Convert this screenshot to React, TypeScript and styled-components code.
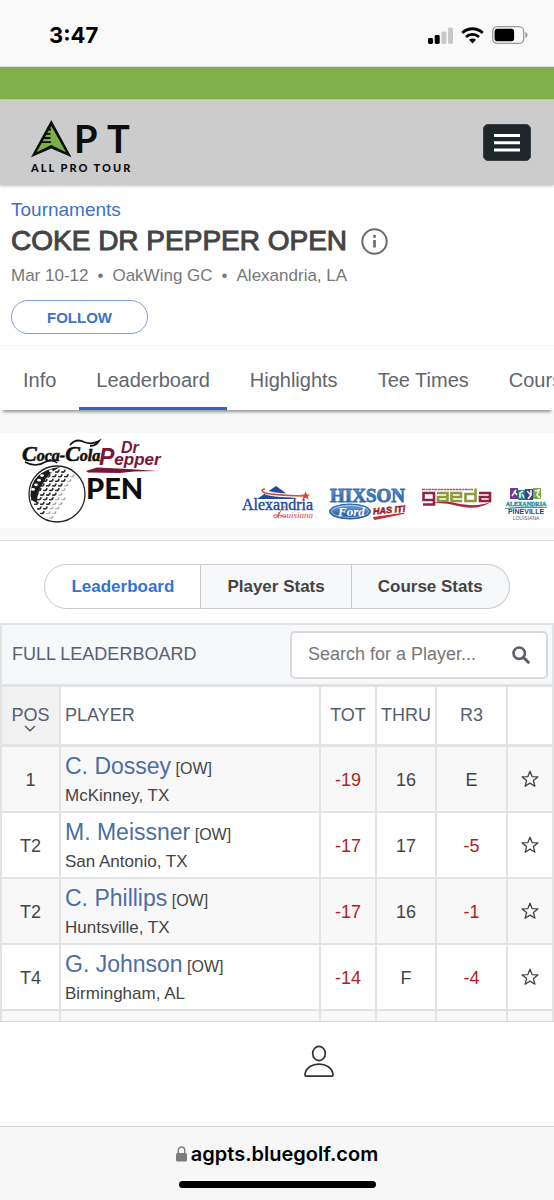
import React from "react";
import styled, { createGlobalStyle } from "styled-components";

const sans = `"Liberation Sans", Arial, sans-serif`;
const system = `Inter, "Liberation Sans", sans-serif`;
const line = "#e2e3e4";

const GlobalStyle = createGlobalStyle`
  *, *::before, *::after { box-sizing: border-box; }
  body { margin: 0; background: #fff; font-family: ${sans}; color: #444; }
  button, input { font: inherit; color: inherit; margin: 0; }
  button { cursor: pointer; }
  svg { display: block; flex: none; }
`;

const Shell = styled.div`
  display: flex;
  flex-direction: column;
  height: 100vh;
  overflow: hidden;
`;

const StatusBar = styled.div`
  display: flex;
  flex: none;
  align-items: center;
  justify-content: space-between;
  height: 67px;
  padding: 4px 26px 0 49px;
  background: #f9f9f9;
  border-bottom: 1px solid #dcdfd8;
`;

const Clock = styled.time`
  font: 700 22px/28px ${system};
  color: #000;
`;

const StatusIcons = styled.div`
  display: flex;
  align-items: center;
  gap: 8px;
`;

const Page = styled.main`
  flex: 1;
  min-height: 0;
  overflow: hidden;
`;

const GreenBand = styled.div`
  height: 33px;
  background: #82b14b;
  border-bottom: 1px solid #c4cdb8;
`;

const SiteHeader = styled.header`
  display: flex;
  align-items: center;
  justify-content: space-between;
  height: 85px;
  padding: 0 23px 0 30px;
  background: #ccc;
  box-shadow: 0 1px 3px rgba(0, 0, 0, 0.25);
`;

const MenuButton = styled.button`
  display: grid;
  place-items: center;
  width: 48px;
  height: 37px;
  padding: 0;
  border: 1px solid #3b4146;
  border-radius: 5px;
  background: #1f262a;
`;

const Intro = styled.section`
  padding: 14px 11px 11px;
  border-bottom: 1px solid #f3f3f3;
`;

const Crumb = styled.a`
  display: block;
  font-size: 19px;
  line-height: 22px;
  color: #3a73c8;
  text-decoration: none;
`;

const TitleRow = styled.div`
  display: flex;
  align-items: center;
  gap: 14px;
  height: 40px;
`;

const Title = styled.h1`
  margin: 0;
  font-size: 28px;
  line-height: 38px;
  font-weight: 400;
  -webkit-text-stroke: 1px #444;
`;

const IconButton = styled.button`
  display: grid;
  place-items: center;
  padding: 0;
  border: 0;
  background: none;
`;

const Meta = styled.p`
  display: flex;
  gap: 9px;
  margin: 5px 0 14px;
  font-size: 17px;
  line-height: 20px;
  color: #777;
`;

const FollowButton = styled.button`
  display: block;
  width: 137px;
  height: 34px;
  padding: 1px 0 0;
  border: 1px solid #7f9fd6;
  border-radius: 17px;
  background: #fff;
  color: #3a73c8;
  font-size: 15px;
  font-weight: 700;
`;

const Tabs = styled.nav`
  position: relative;
  display: flex;
  gap: 6px;
  height: 64px;
  padding: 0 6px;
  background: #fff;
  box-shadow: 0 5px 3px -3px rgba(0, 0, 0, 0.4);
  white-space: nowrap;
`;

const Tab = styled.a<{ $active?: boolean }>`
  flex: none;
  padding: 7px 17px 0;
  border-bottom: 3px solid ${(p) => (p.$active ? "#3762b8" : "transparent")};
  font-size: 20px;
  line-height: 54px;
  color: #62666e;
  text-decoration: none;
`;

const SponsorBand = styled.section`
  padding: 23px 0 12px;
  background: #f8f8f8;
  border-bottom: 1px solid #dedede;
`;

const Sponsors = styled.div`
  display: flex;
  align-items: flex-start;
  justify-content: space-between;
  height: 95px;
  padding: 4px 6px 0 20px;
  background: #fff;
`;

const SponsorLogos = styled.div`
  display: flex;
  gap: 12px;
  padding-top: 48px;
`;

const Segments = styled.div`
  display: flex;
  justify-content: center;
  padding: 23px 0 14px;
`;

const Segment = styled.button<{ $active?: boolean }>`
  height: 45px;
  padding: 0 26px;
  border: 1px solid #c9cacd;
  border-left-width: 0;
  background: ${(p) => (p.$active ? "#fff" : "#f7f8fa")};
  color: ${(p) => (p.$active ? "#3373d6" : "#444")};
  font-size: 17px;
  font-weight: 700;

  &:first-child {
    border-left-width: 1px;
    border-radius: 23px 0 0 23px;
  }
  &:last-child {
    border-radius: 0 23px 23px 0;
  }
`;

const BoardHeader = styled.div`
  display: flex;
  align-items: center;
  justify-content: space-between;
  height: 64px;
  padding: 0 4px 0 10px;
  border: 2px solid ${line};
  border-bottom-width: 3px;
  background: #f7f8fa;
`;

const BoardTitle = styled.h2`
  margin: 0;
  font-size: 18px;
  font-weight: 400;
  color: #5a6072;
`;

const SearchBox = styled.form`
  display: flex;
  width: 258px;
  height: 48px;
  border: 2px solid #d9dadd;
  border-radius: 5px;
  background: #fff;
`;

const SearchInput = styled.input`
  flex: 1;
  min-width: 0;
  padding: 0 0 0 16px;
  border: 0;
  background: none;
  font-size: 18px;

  &::placeholder {
    color: #777;
    opacity: 1;
  }
`;

const SearchButton = styled(IconButton)`
  width: 50px;
`;

const Board = styled.table`
  width: 100%;
  table-layout: fixed;
  border-collapse: separate;
  border-spacing: 0;
  border-left: 2px solid ${line};
  font-size: 18px;
`;

const Col = styled.col<{ $width?: number }>`
  width: ${(p) => (p.$width ? `${p.$width}px` : "auto")};
`;

const HeadCell = styled.th<{ $left?: boolean; $sorted?: boolean }>`
  height: 60px;
  padding: ${(p) => (p.$left ? "0 4px 2px" : "0 0 2px")};
  border-right: 2px solid ${line};
  border-bottom: 3px solid ${line};
  background: ${(p) => (p.$sorted ? "#f2f2f2" : "#fff")};
  font-weight: 400;
  line-height: 20px;
  text-align: ${(p) => (p.$left ? "left" : "center")};
  color: #565d72;
`;

const SortButton = styled.button`
  position: relative;
  padding: 0;
  border: 0;
  background: none;

  svg {
    position: absolute;
    top: 20px;
    left: 50%;
    margin-left: -6px;
  }
`;

const Row = styled.tr`
  background: #fff;

  &:nth-child(odd) {
    background: #f8f8f8;
  }
`;

const Cell = styled.td<{ $left?: boolean; $under?: boolean }>`
  height: 66px;
  padding: ${(p) => (p.$left ? "0 4px" : "2px 0 0")};
  border-right: 2px solid ${line};
  border-bottom: 2px solid ${line};
  text-align: ${(p) => (p.$left ? "left" : "center")};
  color: ${(p) => (p.$under ? "#b5201f" : "#444")};
`;

const PlayerLine = styled.div`
  font-size: 16px;
  line-height: 30px;
`;

const PlayerLink = styled.a`
  font-size: 23px;
  color: #4e6da3;
  text-decoration: none;
`;

const Hometown = styled.div`
  font-size: 17px;
  line-height: 24px;
`;

const StarButton = styled(IconButton)`
  width: 100%;
`;

const BottomNav = styled.nav`
  display: flex;
  flex: none;
  justify-content: center;
  height: 105px;
  padding: 23px 0 0 84px;
  border-top: 1px solid #d6d6d6;
  background: #fff;

  a {
    height: 34px;
    color: #333;
  }
`;

const BrowserBar = styled.footer`
  display: flex;
  flex: none;
  flex-direction: column;
  align-items: center;
  justify-content: space-between;
  height: 74px;
  padding: 14px 0 12px;
  border-top: 1px solid #d2d3d4;
  background: #f7f7f8;
`;

const Address = styled.div`
  display: flex;
  align-items: center;
  gap: 4px;
  font: 600 20px/26px ${system};
  color: #000;
`;

const HomeIndicator = styled.div`
  width: 197px;
  height: 7px;
  border-radius: 4px;
  background: #000;
`;

const SignalIcon = () => (
  <svg width="25" height="17" viewBox="0 0 25 17" aria-hidden="true">
    <rect x="0" y="11" width="5" height="6" rx="1.4" fill="#000" />
    <rect x="6.7" y="8" width="5" height="9" rx="1.4" fill="#000" />
    <rect x="13.4" y="4.5" width="5" height="12.5" rx="1.4" fill="#c8c8c8" />
    <rect x="20" y="0.5" width="5" height="16.5" rx="1.4" fill="#c8c8c8" />
  </svg>
);

const WifiIcon = () => (
  <svg width="23" height="17" viewBox="0 0 23 17" fill="none" stroke="#000" aria-hidden="true">
    <path d="M1.3 6 A14.6 14.6 0 0 1 21.7 6" strokeWidth="3" />
    <path d="M5 9.9 A9.4 9.4 0 0 1 18 9.9" strokeWidth="2.8" />
    <path d="M8 12.8 Q11.5 10.4 15 12.8 L11.5 16.6 Z" fill="#000" stroke="none" />
  </svg>
);

const BatteryIcon = () => (
  <svg width="36" height="18" viewBox="0 0 36 18" aria-hidden="true">
    <rect x="0.7" y="0.7" width="31" height="16.6" rx="4.6" fill="none" stroke="#999" strokeWidth="1.3" />
    <rect x="2.6" y="2.8" width="19.5" height="12.4" rx="2.6" fill="#000" />
    <path d="M33.4 6 Q35.6 7 35.6 9 Q35.6 11 33.4 12 Z" fill="#999" />
  </svg>
);

const AptLogo = () => (
  <svg width="104" height="76" viewBox="30 106 104 76" role="img" aria-label="APT All Pro Tour">
    <path d="M51.3 121 L71.5 158.3 L51.3 149.5 L31 158.3 Z" fill="#0b0e0d" />
    <path d="M51.3 127 L66 153.3 L51.3 146 L36.5 153.3 Z" fill="#7db146" />
    <path
      d="M47.5 130.5 H51 M45.5 134.8 H50.5 M43 139 H50.5 M40.5 143.2 H51"
      stroke="#0b0e0d"
      strokeWidth="1.8"
    />
    <g fill="#0b0e0d" fontFamily="Lato, sans-serif">
      <text x="74" y="154" fontSize="38" fontWeight="700">P</text>
      <text x="107" y="154" fontSize="38" fontWeight="700">T</text>
      <text x="31" y="173" fontSize="11" fontWeight="900" letterSpacing="2">ALL PRO TOUR</text>
    </g>
  </svg>
);

type Dimple = { x: number; y: number; dark: boolean; faint: boolean };

const dimples: Dimple[] = [];
for (let r = 0; r < 11; r++) {
  for (let c = 0; c < 9; c++) {
    const x = 33 + c * 6 + (r % 2) * 3;
    const y = 471 + r * 4.6;
    const dx = x - 57;
    const dy = y - 494;
    const depth = dx + dy * 0.7;
    if (dx * dx + dy * dy < 25 * 25 && dx * 0.95 + dy * 0.45 < 8) {
      dimples.push({ x, y, dark: depth < -22 && dy < 8, faint: depth > 1 });
    }
  }
}

const OpenLogo = () => (
  <svg width="144" height="90" viewBox="20 437 144 90" role="img" aria-label="Coca-Cola Dr Pepper Open">
    <text x="22" y="461" fontFamily="'Liberation Serif', serif" fontStyle="italic" fontWeight="700" fontSize="16" fill="#111" stroke="#111" strokeWidth="0.6">
      <tspan fontSize="22">C</tspan>
      <tspan>oca-</tspan>
      <tspan fontSize="22">C</tspan>
      <tspan>ola</tspan>
    </text>
    <path d="M25 462 Q36 468 45 462 Q54 459 57 463" fill="none" stroke="#111" strokeWidth="1.6" />
    <path d="M70 445 Q76 438 84 442 Q92 445 99 441 Q96 446 90 446" fill="none" stroke="#111" strokeWidth="1.8" />
    <g fontFamily="'Liberation Sans', sans-serif" fontStyle="italic" fontWeight="700" fill="#7b1735">
      <text x="121" y="453" fontSize="16">Dr</text>
      <text x="99" y="465" fontSize="17">
        <tspan fontSize="23">P</tspan>
        <tspan>epper</tspan>
      </text>
    </g>
    <path d="M86 471 L97 467.5 L128 469 L158 471 L134 471.5 L120 473 L88 472.5 Z" fill="#7b1735" />
    <circle cx="57" cy="494" r="28" fill="#fff" stroke="#222" strokeWidth="1.3" />
    <path d="M30.500 496 Q30 471 60 467 Q47 474 44 482 Q37 490 37 503 Q31 501 30.500 496 Z" fill="#1b1b1b" />
    {dimples.map(({ x, y, dark, faint }) =>
      dark ? (
        <ellipse key={`${x}-${y}`} cx={x} cy={y} rx="1.900" ry="1.400" fill="#fff" />
      ) : (
        <path
          key={`${x}-${y}`}
          d={`M${x - 2} ${y + 1} Q${x + 1} ${y + 1.6} ${x + 2} ${y - 1.4} Q${x + 2.8} ${y + 2.6} ${x - 2} ${y + 1} Z`}
          fill={faint ? "#999" : "#222"}
          stroke={faint ? "#999" : "#222"}
          strokeWidth={faint ? 0.4 : 0.9}
        />
      )
    )}
    <text x="86" y="499" fontFamily="Lato, sans-serif" fontSize="29" fontWeight="900" fill="#0d0d0d">PEN</text>
  </svg>
);

const AlexandriaLogo = () => (
  <svg width="76" height="38" viewBox="241 485 76 38" role="img" aria-label="Alexandria Louisiana">
    <path d="M257 499 L276 486 L294 499 Z" fill="#24489a" />
    <path d="M262 490 Q266 494 280 495 L304 496" fill="none" stroke="#fff" strokeWidth="4" />
    <path d="M265 489 Q259 490 265 493 Q273 495 303 496" fill="none" stroke="#d8463b" strokeWidth="1.6" />
    <path d="M305.500 491.500 L307 494.400 L310 494.400 L307.700 496.500 L308.700 499.500 L305.500 497.700 L302.500 499.500 L303.400 496.500 L301 494.400 L304.300 494.400 Z" fill="#d8463b" />
    <text x="242" y="510" fontFamily="'Liberation Serif', serif" fontSize="16" fill="#24489a" stroke="#24489a" strokeWidth="0.4">Alexandria</text>
    <text x="277" y="518" fontFamily="'Liberation Serif', serif" fontSize="9" fontStyle="italic" fill="#d8463b">Louisiana</text>
    <path d="M285 506 Q280 511 277 517 Q273 519 274 515 Q278 514 286 517" fill="none" stroke="#d8463b" strokeWidth="0.9" />
  </svg>
);

const HixsonLogo = () => (
  <svg width="79" height="38" viewBox="329 485 79 38" role="img" aria-label="Hixson Ford Has It!">
    <defs>
      <linearGradient id="hixson" x1="0" y1="0" x2="0" y2="1">
        <stop offset="0" stopColor="#6fa4dc" />
        <stop offset="1" stopColor="#1c4f96" />
      </linearGradient>
    </defs>
    <text x="330" y="502" fontFamily="'Liberation Serif', serif" fontSize="19" fontWeight="700" fill="url(#hixson)" stroke="#3a6fb3" strokeWidth="0.9">HIXSON</text>
    <ellipse cx="350" cy="511.500" rx="20.500" ry="7.500" fill="url(#hixson)" stroke="#24599e" />
    <ellipse cx="350" cy="511.500" rx="18.500" ry="6" fill="none" stroke="#c6dcf2" strokeWidth="0.7" />
    <text x="338" y="516" fontFamily="'Liberation Serif', serif" fontSize="13" fontStyle="italic" fontWeight="700" fill="#fff">Ford</text>
    <g transform="rotate(-5 390 510)">
      <text x="373" y="513" fontFamily="'Liberation Sans', sans-serif" fontSize="9" fontStyle="italic" fontWeight="700" fill="#c4252b" stroke="#7d1418" strokeWidth="0.5">HAS IT!</text>
      <path d="M373 516 L404 514.500 L374 518 Z" fill="#c4252b" stroke="#c4252b" />
    </g>
  </svg>
);

const GaedaLogo = () => (
  <svg width="72" height="38" viewBox="420 485 72 38" role="img" aria-label="gaeda">
    <path d="M422 489.500 H473" stroke="#a8546a" strokeWidth="1.500" strokeDasharray="3 0.600 2 0.500" />
    <g fill="none" strokeWidth="2.600">
      <path d="M434 493 H423.500 V500 H434 M434 491.700 V504.500 H423" stroke="#8d2443" />
      <path d="M437 493 H447.500 V501 H438 V497 H447.500" stroke="#8d9a3a" />
      <path d="M462 501 H451.500 V493 H461 V497 H451.500" stroke="#8d9a3a" />
      <path d="M475.500 488.500 V501 H465.500 V494 H475" stroke="#8d9a3a" />
      <path d="M479 493 H490 V501 H480 V497 H490" stroke="#8d2443" />
    </g>
    <path d="M430 503.500 Q445 500 460 504 Q478 507 491 502 Q477 511 458 506 Q444 502 430 503.500 Z" fill="#a3293f" />
  </svg>
);

const PinevilleLogo = () => (
  <svg width="44" height="38" viewBox="503 486 44 38" role="img" aria-label="Alexandria Pineville Louisiana">
    <rect x="509" y="489" width="8" height="11" fill="#6f3b96" />
    <rect x="517" y="491" width="7" height="10" fill="#25857f" />
    <rect x="524" y="490" width="8" height="11" fill="#3d3d93" />
    <rect x="532" y="489" width="8" height="11" fill="#7da843" />
    <g fill="none" stroke="#fff" strokeWidth="1.500">
      <path d="M511 497 L515 491 M513 492 L516 496" />
      <path d="M519 499 V494 L522 492 M521 495 L523 499" />
      <path d="M526 492 L530 496 L527 500 M530 491 V496" />
      <path d="M534 492 L538 491 L536 496 L539 499" />
    </g>
    <text x="525" y="507" textAnchor="middle" fontFamily="'Liberation Serif', serif" fontSize="6" fontWeight="700" fill="#218b95" stroke="#218b95" strokeWidth="0.300">ALEXANDRIA</text>
    <path d="M504 509.500 Q525 506.500 546 508.500 Q525 508.500 504 509.500 Z" fill="#218b95" stroke="#218b95" strokeWidth="0.500" />
    <text x="525" y="515" textAnchor="middle" fontFamily="'Liberation Sans', sans-serif" fontSize="7" fontWeight="700" fill="#3c3a80">PINEVILLE</text>
    <text x="525" y="521" textAnchor="middle" fontFamily="'Liberation Sans', sans-serif" fontSize="5" fill="#55557c">LOUISIANA</text>
  </svg>
);

const InfoIcon = () => (
  <svg width="27" height="27" viewBox="0 0 27 27" fill="none" stroke="#6a6a6a" aria-hidden="true">
    <circle cx="13.500" cy="13.500" r="12.200" strokeWidth="2" />
    <path d="M13.500 12 V19.500 M13.500 7 V9.800" strokeWidth="2.600" />
  </svg>
);

const SearchIcon = () => (
  <svg width="18" height="18" viewBox="0 0 18 18" fill="none" stroke="#5c6070" aria-hidden="true">
    <circle cx="7.200" cy="7.200" r="5.700" strokeWidth="2.600" />
    <path d="M11.500 11.500 L16.300 16.300" strokeWidth="3" strokeLinecap="round" />
  </svg>
);

const StarIcon = () => (
  <svg width="18" height="20" viewBox="0 0 18 20" fill="none" stroke="#444" strokeWidth="1.300" strokeLinejoin="round" aria-hidden="true">
    <path d="M9 1.200 L11.100 6.600 L16.900 6.900 L12.400 10.600 L13.900 16.200 L9 13.100 L4.100 16.200 L5.600 10.600 L1.100 6.900 L6.900 6.600 Z" />
  </svg>
);

const PersonIcon = () => (
  <svg width="32" height="34" viewBox="0 0 32 34" fill="none" stroke="currentColor" strokeWidth="1.700" aria-hidden="true">
    <ellipse cx="16" cy="8.500" rx="6.300" ry="7.100" />
    <path d="M3.200 31.200 Q1.800 31.200 2 29.500 C2.800 22.600 9 19.200 16 19.200 S29.200 22.600 30 29.500 Q30.200 31.200 28.800 31.200 Z" />
  </svg>
);

const LockIcon = () => (
  <svg width="11" height="16" viewBox="0 0 11 16" aria-hidden="true">
    <rect x="0" y="7" width="11" height="8.500" rx="1.500" fill="#7c7c7f" />
    <path d="M2.300 7.500 V4.300 A3.200 3.300 0 0 1 8.700 4.300 V7.500" fill="none" stroke="#7c7c7f" strokeWidth="1.400" />
  </svg>
);

const tabs = ["Info", "Leaderboard", "Highlights", "Tee Times", "Course"];
const segments = ["Leaderboard", "Player Stats", "Course Stats"];

const players = [
  { pos: "1", name: "C. Dossey", home: "McKinney, TX", total: "-19", thru: "16", round: "E" },
  { pos: "T2", name: "M. Meissner", home: "San Antonio, TX", total: "-17", thru: "17", round: "-5" },
  { pos: "T2", name: "C. Phillips", home: "Huntsville, TX", total: "-17", thru: "16", round: "-1" },
  { pos: "T4", name: "G. Johnson", home: "Birmingham, AL", total: "-14", thru: "F", round: "-4" },
];

const under = (score: string) => score.startsWith("-");

export default function App() {
  return (
    <Shell>
      <GlobalStyle />
      <StatusBar>
        <Clock>3:47</Clock>
        <StatusIcons>
          <SignalIcon />
          <WifiIcon />
          <BatteryIcon />
        </StatusIcons>
      </StatusBar>

      <Page>
        <GreenBand />
        <SiteHeader>
          <AptLogo />
          <MenuButton aria-label="Menu">
            <svg width="26" height="18" viewBox="0 0 26 18" stroke="#fff" strokeWidth="3" aria-hidden="true">
              <path d="M0 1.500 H26 M0 8.800 H26 M0 16.100 H26" />
            </svg>
          </MenuButton>
        </SiteHeader>

        <Intro>
          <Crumb href="#tournaments">Tournaments</Crumb>
          <TitleRow>
            <Title>COKE DR PEPPER OPEN</Title>
            <IconButton aria-label="Tournament information">
              <InfoIcon />
            </IconButton>
          </TitleRow>
          <Meta>
            <span>Mar 10-12</span>
            <span>•</span>
            <span>OakWing GC</span>
            <span>•</span>
            <span>Alexandria, LA</span>
          </Meta>
          <FollowButton>FOLLOW</FollowButton>
        </Intro>

        <Tabs>
          {tabs.map((tab) => (
            <Tab key={tab} href={`#${tab}`} $active={tab === "Leaderboard"}>
              {tab}
            </Tab>
          ))}
        </Tabs>

        <SponsorBand>
          <Sponsors>
            <OpenLogo />
            <SponsorLogos>
              <AlexandriaLogo />
              <HixsonLogo />
              <GaedaLogo />
              <PinevilleLogo />
            </SponsorLogos>
          </Sponsors>
        </SponsorBand>

        <Segments>
          {segments.map((segment) => (
            <Segment key={segment} $active={segment === "Leaderboard"}>
              {segment}
            </Segment>
          ))}
        </Segments>

        <BoardHeader>
          <BoardTitle>FULL LEADERBOARD</BoardTitle>
          <SearchBox role="search">
            <SearchInput type="text" aria-label="Search for a Player" placeholder="Search for a Player..." />
            <SearchButton type="button" aria-label="Search">
              <SearchIcon />
            </SearchButton>
          </SearchBox>
        </BoardHeader>

        <Board>
          <colgroup>
            <Col $width={59} />
            <Col />
            <Col $width={56} />
            <Col $width={60} />
            <Col $width={71} />
            <Col $width={46} />
          </colgroup>
          <thead>
            <tr>
              <HeadCell $sorted>
                <SortButton>
                  POS
                  <svg width="12" height="7" viewBox="0 0 12 7" fill="none" stroke="#555" strokeWidth="1.300" aria-hidden="true">
                    <path d="M1 1 L6 5.800 L11 1" />
                  </svg>
                </SortButton>
              </HeadCell>
              <HeadCell $left>PLAYER</HeadCell>
              <HeadCell>TOT</HeadCell>
              <HeadCell>THRU</HeadCell>
              <HeadCell>R3</HeadCell>
              <HeadCell aria-label="Favorite" />
            </tr>
          </thead>
          <tbody>
            {players.map((p) => (
              <Row key={p.name}>
                <Cell>{p.pos}</Cell>
                <Cell $left>
                  <PlayerLine>
                    <PlayerLink href="#player">{p.name}</PlayerLink> [OW]
                  </PlayerLine>
                  <Hometown>{p.home}</Hometown>
                </Cell>
                <Cell $under={under(p.total)}>{p.total}</Cell>
                <Cell>{p.thru}</Cell>
                <Cell $under={under(p.round)}>{p.round}</Cell>
                <Cell>
                  <StarButton aria-label={`Add ${p.name} to favorites`}>
                    <StarIcon />
                  </StarButton>
                </Cell>
              </Row>
            ))}
            <Row aria-hidden="true">
              <Cell />
              <Cell />
              <Cell />
              <Cell />
              <Cell />
              <Cell />
            </Row>
          </tbody>
        </Board>
      </Page>

      <BottomNav>
        <a href="#account" aria-label="Account">
          <PersonIcon />
        </a>
      </BottomNav>

      <BrowserBar>
        <Address>
          <LockIcon />
          agpts.bluegolf.com
        </Address>
        <HomeIndicator />
      </BrowserBar>
    </Shell>
  );
}
